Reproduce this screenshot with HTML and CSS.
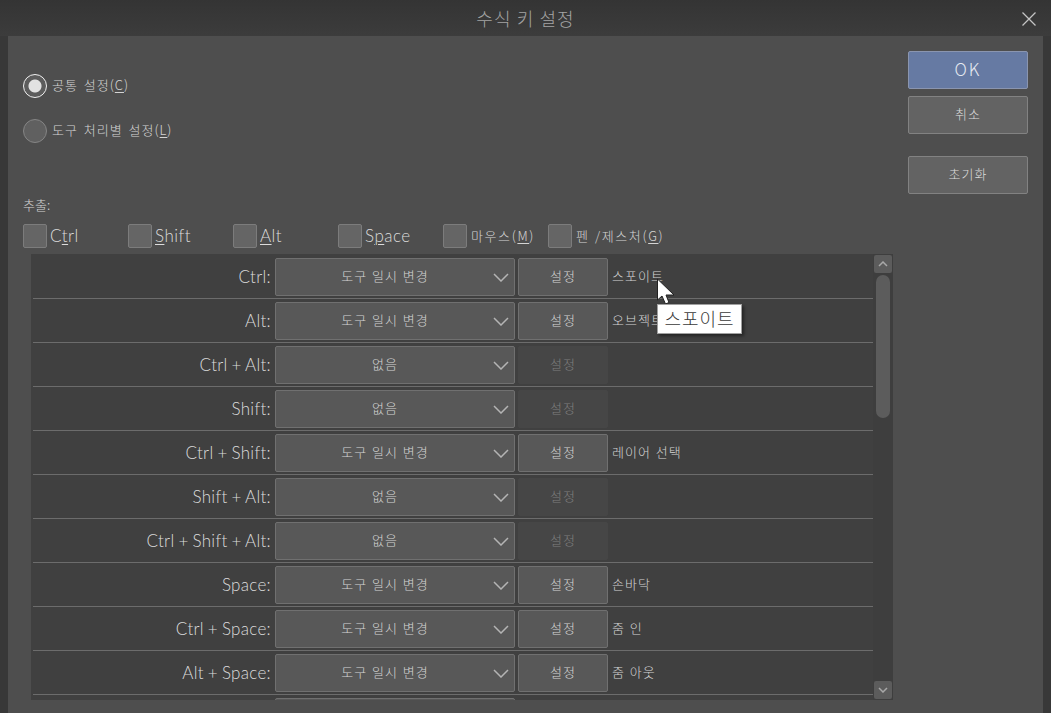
FILE: index.html
```html
<!DOCTYPE html>
<html>

<head>
  <meta charset="utf-8">
  <meta name="viewport" content="width=device-width">
  <title>수식 키 설정</title>
  <link rel="stylesheet" href="styles.css">
</head>

<body>
  <div class="titlebar">
    <span class="title">수식 키 설정</span>
    <svg class="close" width="14" height="14" viewBox="0 0 14 14">
      <path d="M0.5 0.5 L13.5 13.5 M13.5 0.5 L0.5 13.5" stroke="#c4c4c4" stroke-width="1.3" fill="none" />
    </svg>
  </div>

  <div class="main">
    <div class="left">
      <div class="radio-row">
        <span class="radio on"></span>
        <span class="kr">공통 설정(<u>C</u>)</span>
      </div>
      <div class="radio-row">
        <span class="radio"></span>
        <span class="kr">도구 처리별 설정(<u>L</u>)</span>
      </div>

      <div class="filter-label kr">추출:</div>
      <div class="filters">
        <div class="filter"><span class="check"></span><span class="en">C<u>t</u>rl</span></div>
        <div class="filter"><span class="check"></span><span class="en"><u>S</u>hift</span></div>
        <div class="filter"><span class="check"></span><span class="en"><u>A</u>lt</span></div>
        <div class="filter"><span class="check"></span><span class="en">S<u>p</u>ace</span></div>
        <div class="filter"><span class="check"></span><span class="kr">마우스(<u>M</u>)</span></div>
        <div class="filter"><span class="check"></span><span class="kr">펜 /제스처(<u>G</u>)</span></div>
      </div>

      <div class="panel">
        <div class="rows">
          <div class="row">
            <span class="key">Ctrl:</span>
            <div class="combo">도구 일시 변경<svg class="chev" viewBox="0 0 16 9"><path d="M1 1 L8 8 L15 1" /></svg></div>
            <div class="set">설정</div>
            <span class="value">스포이트</span>
          </div>
          <div class="row">
            <span class="key">Alt:</span>
            <div class="combo">도구 일시 변경<svg class="chev" viewBox="0 0 16 9"><path d="M1 1 L8 8 L15 1" /></svg></div>
            <div class="set">설정</div>
            <span class="value">오브젝트</span>
          </div>
          <div class="row">
            <span class="key">Ctrl + Alt:</span>
            <div class="combo">없음<svg class="chev" viewBox="0 0 16 9"><path d="M1 1 L8 8 L15 1" /></svg></div>
            <div class="set off">설정</div>
          </div>
          <div class="row">
            <span class="key">Shift:</span>
            <div class="combo">없음<svg class="chev" viewBox="0 0 16 9"><path d="M1 1 L8 8 L15 1" /></svg></div>
            <div class="set off">설정</div>
          </div>
          <div class="row">
            <span class="key">Ctrl + Shift:</span>
            <div class="combo">도구 일시 변경<svg class="chev" viewBox="0 0 16 9"><path d="M1 1 L8 8 L15 1" /></svg></div>
            <div class="set">설정</div>
            <span class="value">레이어 선택</span>
          </div>
          <div class="row">
            <span class="key">Shift + Alt:</span>
            <div class="combo">없음<svg class="chev" viewBox="0 0 16 9"><path d="M1 1 L8 8 L15 1" /></svg></div>
            <div class="set off">설정</div>
          </div>
          <div class="row">
            <span class="key">Ctrl + Shift + Alt:</span>
            <div class="combo">없음<svg class="chev" viewBox="0 0 16 9"><path d="M1 1 L8 8 L15 1" /></svg></div>
            <div class="set off">설정</div>
          </div>
          <div class="row">
            <span class="key">Space:</span>
            <div class="combo">도구 일시 변경<svg class="chev" viewBox="0 0 16 9"><path d="M1 1 L8 8 L15 1" /></svg></div>
            <div class="set">설정</div>
            <span class="value">손바닥</span>
          </div>
          <div class="row">
            <span class="key">Ctrl + Space:</span>
            <div class="combo">도구 일시 변경<svg class="chev" viewBox="0 0 16 9"><path d="M1 1 L8 8 L15 1" /></svg></div>
            <div class="set">설정</div>
            <span class="value">줌 인</span>
          </div>
          <div class="row">
            <span class="key">Alt + Space:</span>
            <div class="combo">도구 일시 변경<svg class="chev" viewBox="0 0 16 9"><path d="M1 1 L8 8 L15 1" /></svg></div>
            <div class="set">설정</div>
            <span class="value">줌 아웃</span>
          </div>
          <div class="row">
            <div class="combo"></div>
          </div>
        </div>

        <div class="scrollbar">
          <div class="arrow"><svg width="10" height="6" viewBox="0 0 10 6"><path d="M1 5 L5 1 L9 5" /></svg></div>
          <div class="track"><div class="thumb"></div></div>
          <div class="arrow"><svg width="10" height="6" viewBox="0 0 10 6"><path d="M1 1 L5 5 L9 1" /></svg></div>
        </div>
      </div>
    </div>

    <div class="right">
      <div class="btn primary">OK</div>
      <div class="btn">취소</div>
      <div class="btn reset">초기화</div>
    </div>
  </div>

  <!-- mouse pointer and hover tooltip -->
  <svg class="pointer" width="20" height="28" viewBox="0 0 20 28">
    <path d="M1.5 1 L1.5 22 L6 18 L9.5 26 L13 24.5 L10 17 L18 17 Z" fill="#fff" stroke="#222" stroke-width="1" />
  </svg>
  <div class="tooltip">스포이트</div>
</body>

</html>
```

FILE: styles.css
```css
/* Reset default styles */
body {
  margin: 0;
  height: 713px;
  overflow: hidden;
  display: flex;
  flex-direction: column;
  background-color: #383838;
  color: #d8d8d8;
  font-family: "Noto Sans CJK KR", "Noto Sans", sans-serif;
  font-weight: 300;
  font-size: 13px;
  letter-spacing: 1px;
  word-spacing: 1px;
}

u {
  text-underline-offset: 2px;
  text-decoration-thickness: 1px;
}

/* Title bar */
.titlebar {
  height: 36px;
  flex: none;
  display: flex;
  align-items: center;
  justify-content: center;
  box-sizing: border-box;
  position: relative;
  background: linear-gradient(#343434, #3c3c3c);
}

.title {
  font-size: 18px;
  color: #a4a4a4;
  letter-spacing: 1.1px;
  word-spacing: 0;
}

.close {
  position: absolute;
  top: 12px;
  right: 15px;
}

/* Main area */
.main {
  flex: 1;
  margin: 0 8px;
  display: flex;
  background-color: #4e4e4e;
}

.left {
  width: 900px;
  flex: none;
  padding: 38px 0 0 15px;
  box-sizing: border-box;
}

.right {
  display: flex;
  flex-direction: column;
  gap: 7px;
  padding-top: 15px;
}

.kr {
  font-size: 13px;
  color: #d4d4d4;
  white-space: nowrap;
}

.radio-row .kr {
  padding-bottom: 3px;
  word-spacing: 2px;
}

.filter .kr {
  margin-left: 1px;
  padding-bottom: 2px;
  letter-spacing: 1.6px;
}

.en {
  font-family: "Lato", sans-serif;
  font-weight: 300;
  font-size: 17px;
  letter-spacing: 0.5px;
  color: #dcdcdc;
  padding-bottom: 2px;
}

/* Radio buttons */
.radio-row {
  height: 24px;
  margin-bottom: 21px;
  display: flex;
  align-items: center;
  gap: 5px;
}

.radio {
  width: 24px;
  height: 24px;
  box-sizing: border-box;
  border-radius: 50%;
  border: 1px solid #858585;
  background-color: #606060;
}

.radio.on {
  border-color: #f0f0f0;
  background: radial-gradient(circle, #e2e2e2 0 6px, #5c5c5c 7px);
}

/* Filter checkboxes */
.filter-label {
  margin-top: 52px;
  height: 20px;
  line-height: 20px;
  letter-spacing: 0;
}

.filters {
  display: flex;
  margin-top: 9px;
  height: 24px;
}

.filter {
  width: 105px;
  flex: none;
  display: flex;
  align-items: center;
  gap: 3px;
}

.check {
  width: 24px;
  height: 24px;
  flex: none;
  box-sizing: border-box;
  border: 1px solid #7c7c7c;
  border-radius: 2px;
  background-color: #656565;
}

/* Key list */
.panel {
  margin: 6px 0 0 8px;
  width: 862px;
  height: 446px;
  display: flex;
  overflow: hidden;
  background-color: #404040;
}

.rows {
  width: 842px;
  flex: none;
  padding: 1px 0 0 2px;
  box-sizing: border-box;
}

.row {
  height: 44px;
  box-sizing: border-box;
  padding: 3px 0 2px;
  display: flex;
  gap: 3px;
  border-bottom: 1px solid #6c6c6c;
}

.key {
  width: 238px;
  margin-right: 1px;
  flex: none;
  text-align: right;
  line-height: 37px;
  font-family: "Lato", sans-serif;
  font-weight: 300;
  font-size: 17px;
  letter-spacing: 0.3px;
  word-spacing: -1px;
  color: #dcdcdc;
  white-space: pre;
}

.row:last-child .combo {
  margin-left: 242px;
}

.combo {
  width: 240px;
  height: 38px;
  flex: none;
  box-sizing: border-box;
  padding-right: 20px;
  position: relative;
  text-align: center;
  line-height: 34px;
  border: 1px solid #707070;
  border-radius: 2px;
  background-color: #585858;
  color: #d4d4d4;
}

.chev {
  position: absolute;
  top: 14px;
  right: 5px;
  width: 16px;
  height: 9px;
  fill: none;
  stroke: #b4b4b4;
  stroke-width: 1.5;
}

.set {
  width: 90px;
  height: 38px;
  flex: none;
  box-sizing: border-box;
  text-align: center;
  line-height: 34px;
  border: 1px solid #707070;
  border-radius: 2px;
  background-color: #585858;
  color: #d4d4d4;
}

.set.off {
  border-color: #464646;
  background-color: #464646;
  color: #7e7e7e;
}

.value {
  line-height: 36px;
  margin-left: 1px;
  color: #d4d4d4;
  white-space: nowrap;
}

/* Scrollbar */
.scrollbar {
  width: 20px;
  flex: none;
  padding: 1px 1px;
  box-sizing: border-box;
  display: flex;
  flex-direction: column;
  background-color: #3e3e3e;
}

.arrow {
  height: 18px;
  flex: none;
  display: flex;
  align-items: center;
  justify-content: center;
  border-radius: 2px;
  background-color: #5c5c5c;
}

.arrow svg {
  fill: none;
  stroke: #a8a8a8;
  stroke-width: 1.5;
}

.track {
  flex: 1;
  padding: 2px 2px;
}

.thumb {
  height: 143px;
  border-radius: 7px;
  background-color: #5c5c5c;
}

/* Dialog buttons */
.btn {
  width: 120px;
  height: 38px;
  box-sizing: border-box;
  text-align: center;
  line-height: 34px;
  border: 1px solid #828282;
  border-radius: 2px;
  background-color: #636363;
  color: #dcdcdc;
}

.btn.primary {
  background-color: #667aa3;
  border-color: #8a95af;
  color: #e4e8f0;
  font-size: 17px;
  letter-spacing: 2px;
}

.btn.reset {
  margin-top: 15px;
}

/* Tooltip over the list */
.tooltip {
  position: absolute;
  left: 657px;
  top: 304px;
  width: 85px;
  height: 30px;
  box-sizing: border-box;
  text-align: center;
  line-height: 27px;
  font-size: 18px;
  letter-spacing: 1px;
  color: #3a3a3a;
  background-color: #fff;
  border: 1px solid #a0a0a0;
  box-shadow: 2px 2px 3px rgba(0, 0, 0, 0.45);
}

.pointer {
  position: absolute;
  left: 656px;
  top: 278px;
}
```
